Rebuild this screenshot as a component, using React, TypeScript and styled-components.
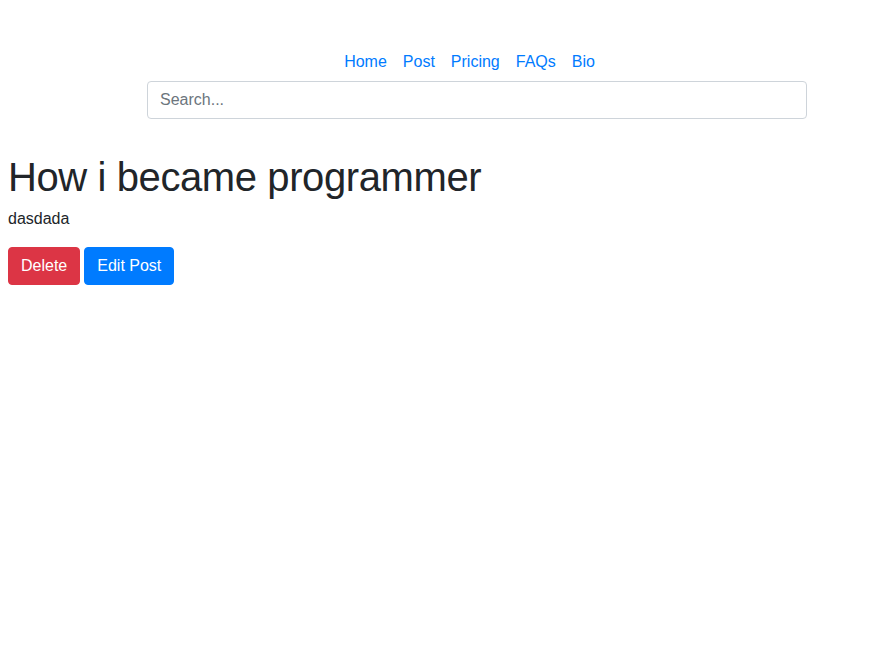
import React from "react";
import styled, { createGlobalStyle } from "styled-components";

const Global = createGlobalStyle`
  html, body { background: #fff; }
  body {
    margin: 8px;
    font-family: "Liberation Sans", Arial, sans-serif;
    font-size: 16px;
    line-height: 1.5;
    color: #212529;
  }
  * { box-sizing: border-box; }
`;

const Header = styled.header`
  display: flex;
  flex-direction: column;
  align-items: center;
  padding-top: 34px;
  padding-left: 139px;
  width: 799px;
`;

const NavList = styled.ul`
  display: flex;
  list-style: none;
  margin: 0 15px 0 0;
  padding: 0;
`;

const NavLink = styled.a`
  display: block;
  padding: 8px 8px 7px;
  color: #007bff;
  text-decoration: none;
  line-height: 24px;
`;

const Search = styled.input`
  display: block;
  width: 660px;
  height: 38px;
  padding: 6px 12px;
  font: inherit;
  font-size: 16px;
  color: #495057;
  border: 1px solid #ced4da;
  border-radius: 4px;
  outline: none;
  &::placeholder { color: #6c757d; }
`;

const Main = styled.main`
  padding-top: 34px;
`;

const Title = styled.h1`
  margin: 0 0 6px;
  font-size: 40px;
  font-weight: 500;
  line-height: 48px;
  letter-spacing: -0.4px;
`;

const Body = styled.p`
  margin: 0 0 16px;
`;

const Actions = styled.div`
  display: flex;
  gap: 4px;
`;

const Button = styled.button<{ $variant: "danger" | "primary" }>`
  height: 38px;
  padding: 6px 12px;
  font: inherit;
  font-size: 16px;
  line-height: 24px;
  color: #fff;
  border: 1px solid ${(p) => (p.$variant === "danger" ? "#dc3545" : "#007bff")};
  background: ${(p) => (p.$variant === "danger" ? "#dc3545" : "#007bff")};
  border-radius: 4px;
  cursor: pointer;
`;

export default function App() {
  return (
    <>
      <Global />
      <Header>
        <NavList>
          {["Home", "Post", "Pricing", "FAQs", "Bio"].map((l) => (
            <li key={l}>
              <NavLink href="#">{l}</NavLink>
            </li>
          ))}
        </NavList>
        <Search placeholder="Search..." />
      </Header>
      <Main>
        <Title>How i became programmer</Title>
        <Body>dasdada</Body>
        <Actions>
          <Button $variant="danger">Delete</Button>
          <Button $variant="primary">Edit Post</Button>
        </Actions>
      </Main>
    </>
  );
}
